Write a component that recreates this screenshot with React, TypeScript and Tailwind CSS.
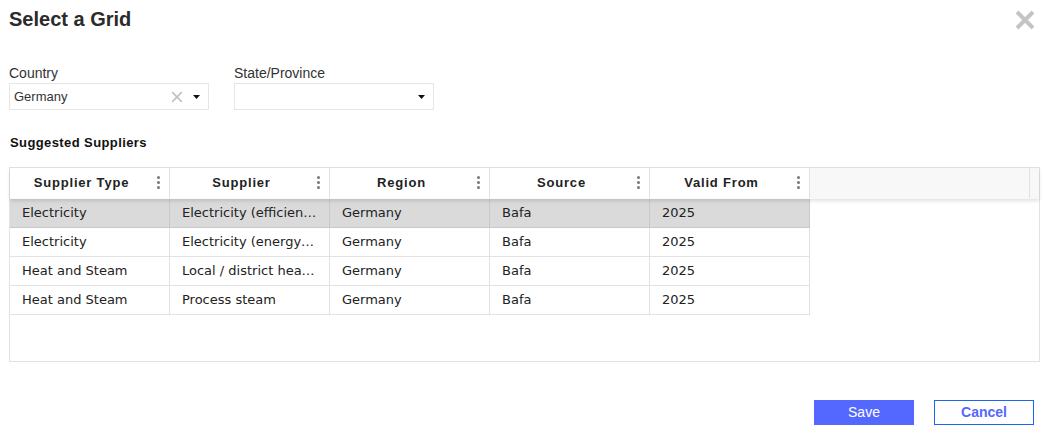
const columns = ["Supplier Type", "Supplier", "Region", "Source", "Valid From"];

const rows = [
  ["Electricity", "Electricity (efficiency)", "Germany", "Bafa", "2025"],
  ["Electricity", "Electricity (energy mix)", "Germany", "Bafa", "2025"],
  ["Heat and Steam", "Local / district heating", "Germany", "Bafa", "2025"],
  ["Heat and Steam", "Process steam", "Germany", "Bafa", "2025"],
];

function Caret() {
  return (
    <svg width="7" height="4" viewBox="0 0 7 4" className="shrink-0">
      <path d="M0 0h7L3.5 4z" fill="#111" />
    </svg>
  );
}

function CloseIcon({ size, stroke }: { size: number; stroke: number }) {
  return (
    <svg width={size} height={size} viewBox="0 0 20 20" className="shrink-0">
      <path d="M2 2L18 18M18 2L2 18" stroke="#c4c4c4" strokeWidth={stroke} fill="none" />
    </svg>
  );
}

function SelectBox({ label, value }: { label: string; value?: string }) {
  return (
    <div className="w-[200px]">
      <div className="h-[20px] text-[14px] leading-[20px] text-[#333]">{label}</div>
      <div className="flex h-[27px] items-center border border-[#e6e6e6] pl-[4px] pr-[8px] text-[13px] text-[#333]">
        <span className="flex-1 truncate">{value}</span>
        {value && (
          <span className="mr-[10px]">
            <CloseIcon size={12} stroke={3} />
          </span>
        )}
        <Caret />
      </div>
    </div>
  );
}

function HeaderCell({ label }: { label: string }) {
  return (
    <div className="relative flex h-[30px] w-[160px] shrink-0 items-center justify-center border-r border-[#e2e2e2] bg-white pr-[16px] text-[13px] font-bold tracking-[0.8px] text-[#222]">
      {label}
      <span className="absolute right-[9px] top-[8px] flex flex-col gap-[2px]">
        <i className="block h-[3px] w-[3px] rounded-full bg-[#777]" />
        <i className="block h-[3px] w-[3px] rounded-full bg-[#777]" />
        <i className="block h-[3px] w-[3px] rounded-full bg-[#777]" />
      </span>
    </div>
  );
}

export default function App() {
  return (
    <div className="relative h-[433px] w-[1043px] overflow-hidden bg-white font-['Liberation_Sans',Arial,sans-serif]">
      <div className="px-[9px] pt-[8px]">
        <div className="flex items-start justify-between">
          <h1 className="text-[20px] font-bold leading-[23px] text-[#2b2b2b]">Select a Grid</h1>
          <span className="mr-[-1px] mt-[2px]">
            <CloseIcon size={20} stroke={4} />
          </span>
        </div>

        <div className="mt-[32px] flex gap-[25px]">
          <SelectBox label="Country" value="Germany" />
          <SelectBox label="State/Province" />
        </div>

        <div className="mt-[24px] pl-[1px] text-[13px] font-bold leading-[17px] tracking-[0.4px] text-[#111]">
          Suggested Suppliers
        </div>

        <div className="mt-[16px] h-[195px] w-[1031px] border border-[#e2e2e2]">
          <div className="relative z-10 flex h-[31px] bg-[#f8f8f8] shadow-[0_2px_4px_rgba(0,0,0,0.12)]">
            {columns.map((c) => (
              <HeaderCell key={c} label={c} />
            ))}
            <div className="ml-auto mr-[9px] h-[30px] border-r border-[#e2e2e2]" />
          </div>
          {rows.map((row, i) => (
            <div
              key={i}
              className={`flex h-[29px] w-[800px] border-b ${i === 0 ? "border-[#c8c8c8] bg-[#dadada]" : "border-[#e2e2e2] bg-white"}`}
            >
              {row.map((cell, j) => (
                <div
                  key={j}
                  className={`flex w-[160px] shrink-0 items-center border-r px-[12px] font-['DejaVu_Sans',sans-serif] text-[13px] text-[#222] ${i === 0 ? "border-[#c8c8c8]" : "border-[#e2e2e2]"}`}
                >
                  <span className="truncate">{cell}</span>
                </div>
              ))}
            </div>
          ))}
        </div>

        <div className="mt-[38px] flex justify-end gap-[20px]">
          <button className="h-[25px] w-[100px] bg-[#5468ff] text-[14px] font-medium text-white">Save</button>
          <button className="h-[25px] w-[100px] border border-[#1a66ee] bg-white text-[14px] font-bold text-[#5468ff]">
            Cancel
          </button>
        </div>
      </div>
    </div>
  );
}
